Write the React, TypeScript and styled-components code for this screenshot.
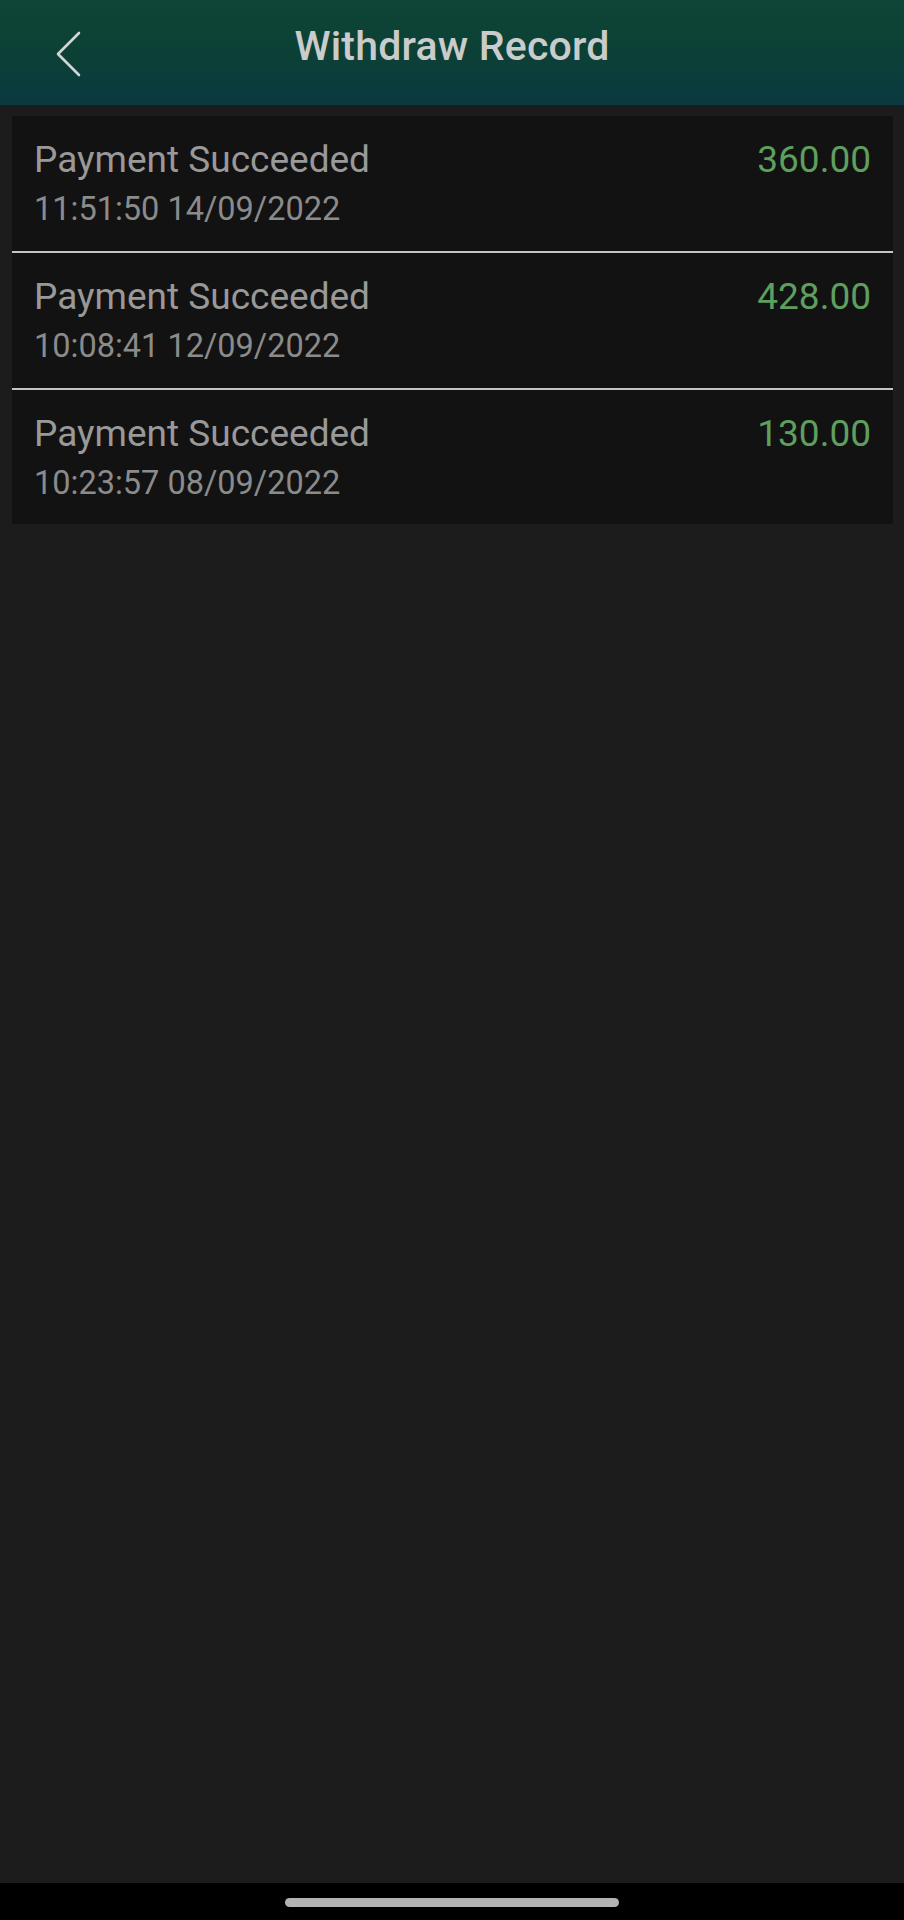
import React from "react";
import styled, { createGlobalStyle } from "styled-components";

const GlobalStyle = createGlobalStyle`
  html, body {
    margin: 0;
    padding: 0;
    background: #1c1c1c;
  }
  body {
    font-family: Roboto, "Liberation Sans", Arial, sans-serif;
  }
  * { box-sizing: border-box; }
`;

const Screen = styled.div`
  width: 904px;
  height: 1920px;
  display: flex;
  flex-direction: column;
  background: #1c1c1c;
`;

const Header = styled.header`
  height: 105px;
  flex: none;
  display: grid;
  grid-template-columns: 120px 1fr 120px;
  align-items: center;
  background: linear-gradient(180deg, #0e4535 0%, #0c4037 55%, #0a3940 100%);
`;

const BackButton = styled.button`
  justify-self: start;
  margin-left: 54px;
  margin-top: 2px;
  padding: 0;
  border: none;
  background: none;
  width: 32px;
  height: 46px;
  display: flex;
  align-items: center;
  cursor: pointer;
`;

const Title = styled.h1`
  margin: 0;
  margin-top: -13px;
  text-align: center;
  font-size: 41px;
  font-weight: 500;
  color: #c9cccb;
  letter-spacing: 0.2px;
`;

const Content = styled.main`
  flex: 1;
  padding: 11px 11px 0 12px;
`;

const Card = styled.section`
  background: #121212;
  display: flex;
  flex-direction: column;
`;

const Row = styled.div<{ $divider: boolean }>`
  display: flex;
  justify-content: space-between;
  align-items: flex-start;
  padding: 23px 22px 0 22px;
  height: ${(p) => (p.$divider ? "137px" : "134px")};
  border-bottom: ${(p) => (p.$divider ? "2px solid #c4c4c4" : "none")};
`;

const Info = styled.div`
  display: flex;
  flex-direction: column;
  gap: 9px;
`;

const Status = styled.div`
  font-size: 37px;
  line-height: 42px;
  color: #999999;
`;

const Time = styled.div`
  font-size: 32.5px;
  line-height: 38px;
  color: #8b8b8b;
`;

const Amount = styled.div`
  font-size: 37px;
  line-height: 42px;
  color: #5e9f5e;
`;

const NavBar = styled.div`
  height: 37px;
  flex: none;
  background: #000;
  display: flex;
  justify-content: center;
  align-items: center;
`;

const HomeIndicator = styled.div`
  width: 334px;
  height: 9px;
  margin-top: 1px;
  border-radius: 5px;
  background: #b3b3b3;
`;

const records = [
  { status: "Payment Succeeded", time: "11:51:50 14/09/2022", amount: "360.00" },
  { status: "Payment Succeeded", time: "10:08:41 12/09/2022", amount: "428.00" },
  { status: "Payment Succeeded", time: "10:23:57 08/09/2022", amount: "130.00" },
];

export default function App() {
  return (
    <>
      <GlobalStyle />
      <Screen>
        <Header>
          <BackButton aria-label="Back">
            <svg width="28" height="46" viewBox="0 0 28 46" fill="none">
              <path
                d="M25 2 L4 23 L25 44"
                stroke="#d3d6d5"
                strokeWidth="2.6"
                strokeLinecap="round"
                strokeLinejoin="round"
              />
            </svg>
          </BackButton>
          <Title>Withdraw Record</Title>
          <div />
        </Header>
        <Content>
          <Card>
            {records.map((r, i) => (
              <Row key={i} $divider={i < records.length - 1}>
                <Info>
                  <Status>{r.status}</Status>
                  <Time>{r.time}</Time>
                </Info>
                <Amount>{r.amount}</Amount>
              </Row>
            ))}
          </Card>
        </Content>
        <NavBar>
          <HomeIndicator />
        </NavBar>
      </Screen>
    </>
  );
}
